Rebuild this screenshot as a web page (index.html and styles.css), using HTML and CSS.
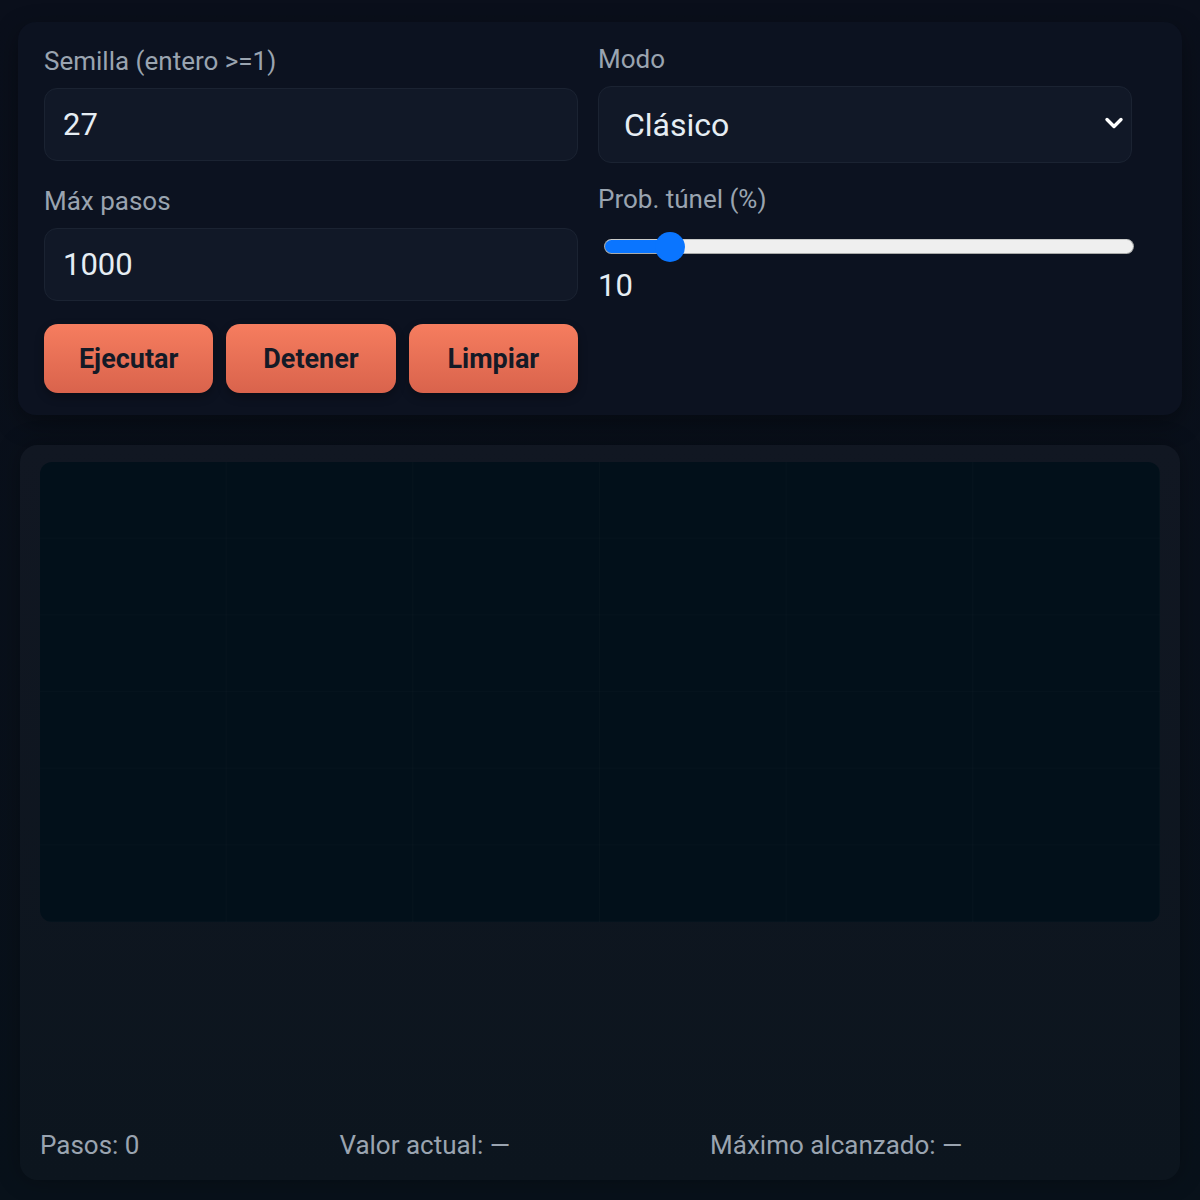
FILE: index.html
```html
<html lang="es"><head>
  <meta charset="UTF-8">
  <meta name="viewport" content="width=device-width, initial-scale=1.0">
  <title>Túnel de Collatz</title>
  <link rel="stylesheet" href="styles.css">
</head>
<body>
  <div class="panel controls">
    <div class="field">
      <label>Semilla (entero &gt;=1)</label>
      <input type="text" class="box" value="27">
    </div>
    <div class="field shift">
      <label>Modo</label>
      <div class="select-wrap">
        <select class="box select">
          <option>Clásico</option>
          <option>Túnel</option>
        </select>
        <svg class="chev" width="20" height="14" viewBox="0 0 20 14"><path d="M3 3.5 L10 10.5 L17 3.5" fill="none" stroke="#ffffff" stroke-width="3.4" stroke-linecap="round" stroke-linejoin="round"/></svg>
      </div>
    </div>
    <div class="field">
      <label>Máx pasos</label>
      <input type="text" class="box" value="1000">
    </div>
    <div class="field shift">
      <label>Prob. túnel (%)</label>
      <input type="range" class="range" min="0" max="100" value="10">
      <div class="range-val">10</div>
    </div>
    <div class="buttons">
      <button class="btn">Ejecutar</button>
      <button class="btn">Detener</button>
      <button class="btn">Limpiar</button>
    </div>
  </div>

  <div class="panel output">
    <div class="canvas"></div>
    <div class="stats">
      <span>Pasos: 0</span>
      <span>Valor actual: —</span>
      <span>Máximo alcanzado: —</span>
    </div>
  </div>
</body></html>
```

FILE: styles.css
```css
html, body {
  margin: 0;
  padding: 0;
  min-height: 100%;
}
body {
  font-family: Roboto, "Noto Sans", sans-serif;
  color: #e6edf3;
  background: linear-gradient(#0a0f1b, #08111a);
  padding: 22px 18px 0 18px;
  box-sizing: border-box;
  height: 1200px;
}
.panel {
  border-radius: 18px;
}
.controls {
  background: #0c1220;
  box-shadow: 0 8px 24px rgba(0, 0, 0, 0.35);
  display: grid;
  grid-template-columns: 534px 534px;
  column-gap: 20px;
  padding: 24px 50px 22px 26px;
  height: 393px;
  box-sizing: border-box;
  align-content: start;
}
.field {
  display: flex;
  flex-direction: column;
}
.field label {
  font-size: 26px;
  line-height: 30px;
  color: #9aa4b0;
  margin-bottom: 12px;
}
.field.shift {
  margin-top: -2px;
}
.box {
  font-family: Roboto, sans-serif;
  width: 100%;
  box-sizing: border-box;
  height: 73px;
  padding: 0 18px;
  font-size: 31px;
  color: #e6edf3;
  background: #111827;
  border: 1px solid #1b2332;
  border-radius: 13px;
  outline: none;
  margin-bottom: 25px;
}
.select-wrap {
  position: relative;
}
.select {
  -webkit-appearance: none;
  appearance: none;
  height: 77px;
  padding: 0 25px;
  font-size: 32px;
  margin-bottom: 22px;
}
.chev {
  position: absolute;
  right: 8px;
  top: 30px;
}
.range {
  -webkit-appearance: none;
  appearance: none;
  width: 530px;
  height: 15px;
  margin: 13px 0 0 6px;
  border-radius: 8px;
  border: 1px solid #a9aaa9;
  border-top-color: #c9cac9;
  background: linear-gradient(to right, #0a75ff 0 12%, #efefef 12% 100%);
  box-sizing: border-box;
}
.range::-webkit-slider-thumb {
  -webkit-appearance: none;
  width: 30px;
  height: 30px;
  border-radius: 50%;
  background: #0a75ff;
  border: none;
}
.range-val {
  font-size: 31px;
  line-height: 36px;
  margin-top: 14px;
}
.buttons {
  display: flex;
  gap: 13px;
  margin-top: -2px;
}
.btn {
  flex: 1;
  height: 69px;
  border: none;
  border-radius: 14px;
  background: linear-gradient(#f67d5f, #d9634c);
  color: #141a26;
  font-family: Roboto, sans-serif;
  font-weight: bold;
  font-size: 27px;
  box-shadow: 0 4px 10px rgba(0, 0, 0, 0.3);
  cursor: pointer;
}
.output {
  margin: 30px 2px 0 2px;
  background: linear-gradient(#111722, #0c151e);
  box-shadow: 0 0 24px rgba(0, 0, 0, 0.3);
  padding: 17px 20px 20px 20px;
  height: 735px;
  box-sizing: border-box;
  display: flex;
  flex-direction: column;
}
.canvas {
  height: 460px;
  border-radius: 12px;
  background-color: #02101a;
  background-image:
    linear-gradient(to right, rgba(255, 255, 255, 0.015) 1px, transparent 1px),
    linear-gradient(to bottom, rgba(255, 255, 255, 0.012) 1px, transparent 1px);
  background-size: 186.67px 76.67px;
  background-position: -1px -1px;
}
.stats {
  margin-top: auto;
  display: flex;
  gap: 200px;
  font-size: 26px;
  line-height: 30px;
  color: #9aa4b0;
}
```
